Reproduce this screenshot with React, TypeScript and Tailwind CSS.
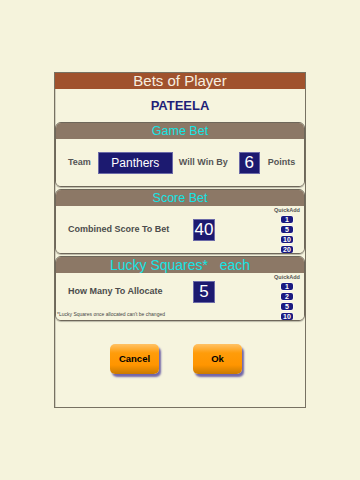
import React from "react";

const font = "font-['Liberation_Sans',Arial,sans-serif]";

function Badge({ n }: { n: string }) {
  return (
    <div className="mt-[3px] h-[7px] min-w-[12px] px-[1px] rounded-[2px] bg-[#1b1a80] ring-[0.5px] ring-white flex items-center justify-center text-white text-[7px] font-bold leading-none">
      {n}
    </div>
  );
}

function QuickAdd({ values }: { values: string[] }) {
  return (
    <div className="w-[28px] mr-[3px] pt-[1px] flex flex-col items-center">
      <div className="text-[5.5px] leading-[7px] font-bold text-[#555]">QuickAdd</div>
      <div className="-mt-[1px] flex flex-col items-center">
        {values.map((v) => (
          <Badge key={v} n={v} />
        ))}
      </div>
    </div>
  );
}

function Section({
  title,
  big,
  className,
  children,
}: {
  title: string;
  big?: boolean;
  className?: string;
  children: React.ReactNode;
}) {
  return (
    <div
      className={`shrink-0 rounded-[6px] border border-[#6e675a] overflow-hidden shadow-[0_1px_1px_rgba(0,0,0,0.25)] ${className ?? ""}`}
    >
      <div
        className={`h-[16px] bg-[#8c7866] flex items-center justify-center text-[#14e4e4] whitespace-pre ${
          big ? "text-[14px]" : "text-[12.5px]"
        }`}
      >
        {title}
      </div>
      <div className="h-[47px] bg-[#f6f4de] flex">{children}</div>
    </div>
  );
}

function NavyBox({ children, className }: { children: React.ReactNode; className: string }) {
  return (
    <div className={`bg-[#1c1a70] text-white flex items-center justify-center border border-[#6b6aa8] ${className}`}>
      {children}
    </div>
  );
}

function OrangeButton({ label }: { label: string }) {
  return (
    <button className="w-[49px] h-[30px] rounded-[5px] bg-[linear-gradient(#ffc266_0%,#ff9c0a_30%,#ff9500_70%,#c97a00_100%)] shadow-[2px_3px_2px_rgba(70,55,150,0.75)] text-black text-[9.5px] font-bold">
      {label}
    </button>
  );
}

export default function App() {
  return (
    <div className={`min-h-screen bg-[#f5f3dc] pt-[72px] pl-[54px] ${font}`}>
      <div className="w-[252px] h-[336px] border border-[#777162] bg-[#f6f4de] flex flex-col shadow-[inset_1px_1px_0_rgba(0,0,0,0.15)]">
        <div className="shrink-0 h-[16px] bg-[#a0522d] flex items-center justify-center text-[#f7efe0] text-[15px] font-medium">
          Bets of Player
        </div>
        <div className="shrink-0 h-[33px] flex items-center justify-center text-[#1f1f78] text-[13px] font-bold">
          PATEELA
        </div>

        <Section title="Game Bet">
          <div className="flex-1 flex items-center pl-[12px] text-[#555] text-[9px] font-bold">
            <span>Team</span>
            <NavyBox className="ml-[7px] w-[75px] h-[22px] text-[12px] font-normal">Panthers</NavyBox>
            <span className="ml-[6px]">Will Win By</span>
            <NavyBox className="ml-[11px] w-[21px] h-[22px] text-[17px] font-normal">6</NavyBox>
            <span className="ml-[8px]">Points</span>
          </div>
        </Section>

        <Section title="Score Bet" className="mt-[2px]">
          <div className="flex-1 flex items-center pl-[12px] text-[#4c4c4c]">
            <span className="w-[125px] text-[9px] font-bold">Combined Score To Bet</span>
            <NavyBox className="w-[22px] h-[22px] text-[17px]">40</NavyBox>
          </div>
          <QuickAdd values={["1", "5", "10", "20"]} />
        </Section>

        <Section title="Lucky Squares*   each" big className="mt-[2px]">
          <div className="flex-1 flex flex-col">
            <div className="flex-1 flex items-center pl-[12px] text-[#4c4c4c]">
              <span className="w-[125px] text-[9px] font-bold">How Many To Allocate</span>
              <NavyBox className="w-[22px] h-[22px] text-[17px]">5</NavyBox>
            </div>
            <div className="pl-[1px] pb-[3px] text-[5px] leading-[6px] text-[#444]">
              *Lucky Squares once allocated can't be changed
            </div>
          </div>
          <QuickAdd values={["1", "2", "5", "10"]} />
        </Section>

        <div className="flex-1 flex items-start pt-[23px] pl-[55px] gap-[34px]">
          <OrangeButton label="Cancel" />
          <OrangeButton label="Ok" />
        </div>
      </div>
    </div>
  );
}
